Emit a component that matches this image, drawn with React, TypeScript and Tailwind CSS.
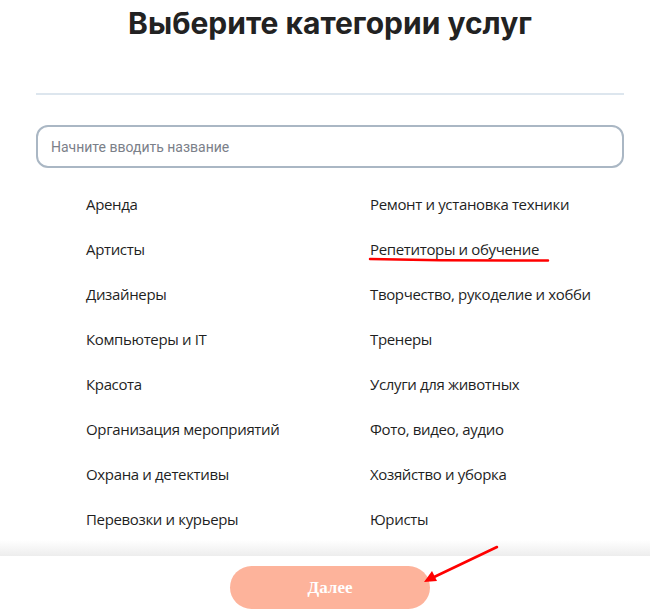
import React from "react";

const left = ["Аренда", "Артисты", "Дизайнеры", "Компьютеры и IT", "Красота", "Организация мероприятий", "Охрана и детективы", "Перевозки и курьеры"];
const right = ["Ремонт и установка техники", "Репетиторы и обучение", "Творчество, рукоделие и хобби", "Тренеры", "Услуги для животных", "Фото, видео, аудио", "Хозяйство и уборка", "Юристы"];

export default function App() {
  const rows = left.map((l, i) => [l, right[i]]);
  return (
    <div className="relative w-[650px] h-[611px] overflow-hidden bg-white flex flex-col" style={{ fontFamily: '"Open Sans", "Noto Sans", sans-serif' }}>
      <h1 className="shrink-0 text-center text-[30px] leading-[36px] font-bold text-[#222222] pt-[5px] pl-[10px]" style={{ fontFamily: 'Inter, "Open Sans", sans-serif' }}>
        Выберите категории услуг
      </h1>
      <div className="shrink-0 ml-[36px] w-[588px] h-[2px] bg-[#dde6ee] mt-[52px]" />
      <div className="shrink-0 ml-[36px] w-[588px] h-[43px] mt-[30px] border-2 border-[#aab7c4] rounded-[12px] flex items-center pl-[13px] pt-[2px]">
        <span className="text-[14px] text-[#7b8089]" style={{ fontFamily: 'Roboto, sans-serif' }}>Начните вводить название</span>
      </div>
      <div className="flex-1 min-h-0 overflow-hidden">
        <div className="ml-[86px] mt-[24px] flex flex-col">
          {rows.map(([a, b]) => (
            <div key={a} className="shrink-0 grid grid-cols-[284px_284px] h-[45px] items-start">
              <span className="text-[15px] leading-[24px] tracking-[-0.35px] text-[#1f1f1f]">{a}</span>
              <span className="text-[15px] leading-[24px] tracking-[-0.35px] text-[#1f1f1f]">{b}</span>
            </div>
          ))}
        </div>
      </div>
      <div className="shrink-0 h-[16px] bg-gradient-to-b from-white to-[#ededed]" />
      <div className="shrink-0 h-[55px] bg-white flex justify-center pt-[10px] pl-[10px]">
        <button className="w-[200px] h-[43px] rounded-full bg-[#fdb39b] text-white text-[17px] font-bold" style={{ fontFamily: '"Liberation Serif", serif' }}>
          Далее
        </button>
      </div>
      <svg className="absolute left-0 top-0 pointer-events-none" width="650" height="611">
        <path d="M370 259 Q460 261 548 260.5" stroke="#ff0000" strokeWidth="2.5" fill="none" strokeLinecap="round" />
        <line x1="497" y1="547" x2="432" y2="578" stroke="#ff0000" strokeWidth="2.5" strokeLinecap="round" />
        <polygon points="424,582 432,571 437,581" fill="#ff0000" />
      </svg>
    </div>
  );
}
